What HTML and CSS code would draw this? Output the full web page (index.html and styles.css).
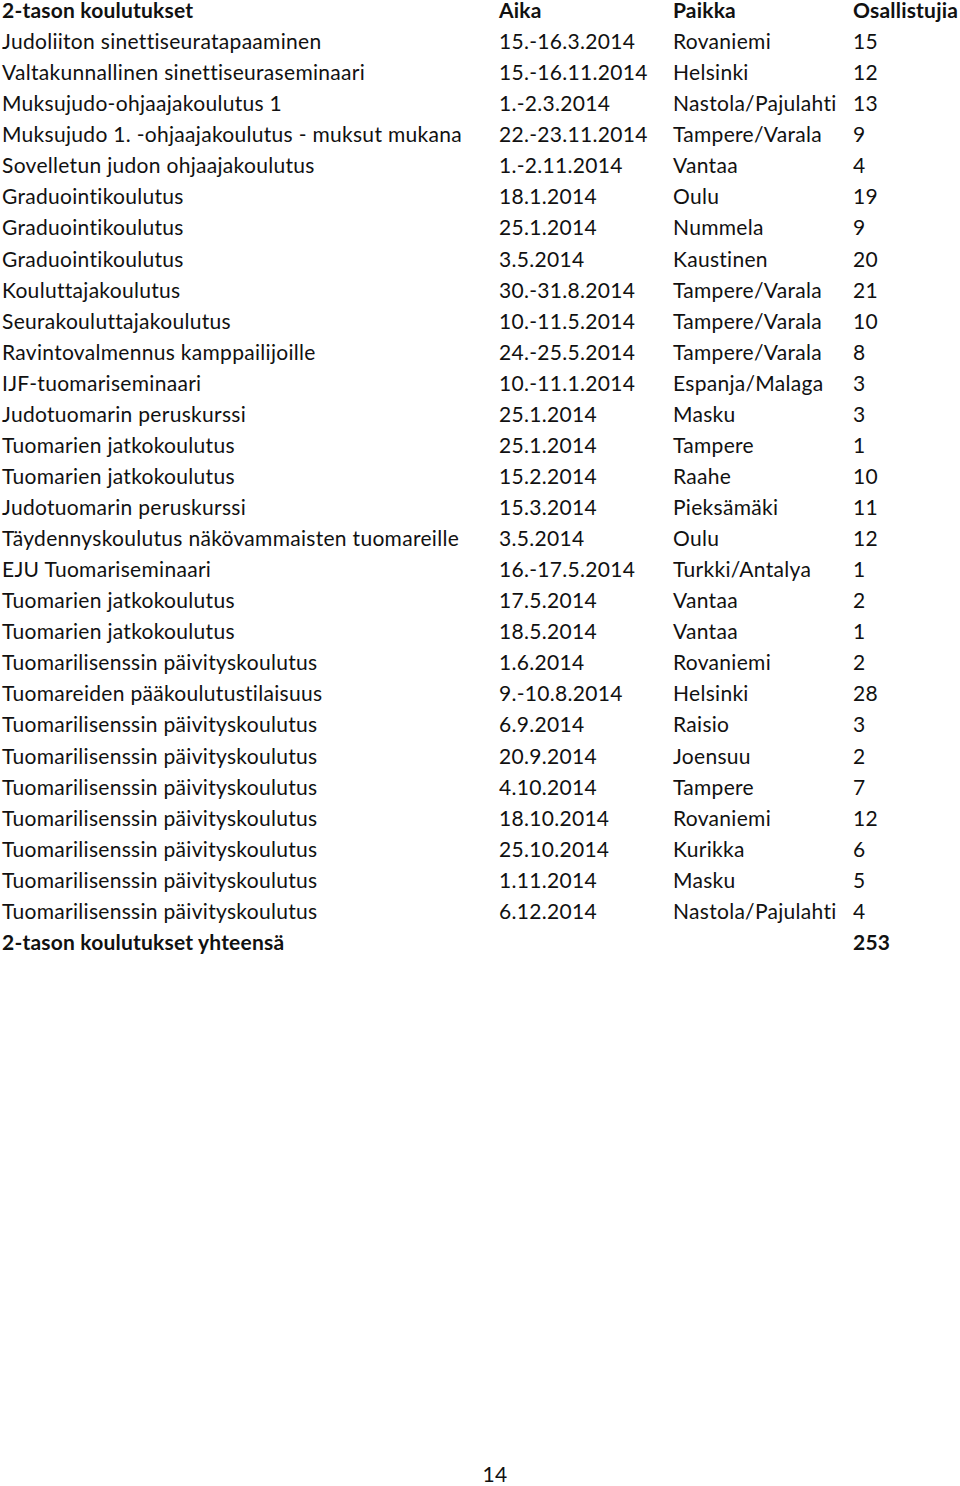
FILE: index.html
```html
<!DOCTYPE html>
<html lang="fi">
<head>
<meta charset="utf-8">
<link rel="stylesheet" href="styles.css">
</head>
<body>
<div class="page">
<div class="table">
<div class="row head"><span>2-tason koulutukset</span><span>Aika</span><span>Paikka</span><span>Osallistujia</span></div>
<div class="row"><span>Judoliiton sinettiseuratapaaminen</span><span>15.-16.3.2014</span><span>Rovaniemi</span><span>15</span></div>
<div class="row"><span>Valtakunnallinen sinettiseuraseminaari</span><span>15.-16.11.2014</span><span>Helsinki</span><span>12</span></div>
<div class="row"><span>Muksujudo-ohjaajakoulutus 1</span><span>1.-2.3.2014</span><span>Nastola/Pajulahti</span><span>13</span></div>
<div class="row"><span>Muksujudo 1. -ohjaajakoulutus - muksut mukana</span><span>22.-23.11.2014</span><span>Tampere/Varala</span><span>9</span></div>
<div class="row"><span>Sovelletun judon ohjaajakoulutus</span><span>1.-2.11.2014</span><span>Vantaa</span><span>4</span></div>
<div class="row"><span>Graduointikoulutus</span><span>18.1.2014</span><span>Oulu</span><span>19</span></div>
<div class="row"><span>Graduointikoulutus</span><span>25.1.2014</span><span>Nummela</span><span>9</span></div>
<div class="row"><span>Graduointikoulutus</span><span>3.5.2014</span><span>Kaustinen</span><span>20</span></div>
<div class="row"><span>Kouluttajakoulutus</span><span>30.-31.8.2014</span><span>Tampere/Varala</span><span>21</span></div>
<div class="row"><span>Seurakouluttajakoulutus</span><span>10.-11.5.2014</span><span>Tampere/Varala</span><span>10</span></div>
<div class="row"><span>Ravintovalmennus kamppailijoille</span><span>24.-25.5.2014</span><span>Tampere/Varala</span><span>8</span></div>
<div class="row"><span>IJF-tuomariseminaari</span><span>10.-11.1.2014</span><span>Espanja/Malaga</span><span>3</span></div>
<div class="row"><span>Judotuomarin peruskurssi</span><span>25.1.2014</span><span>Masku</span><span>3</span></div>
<div class="row"><span>Tuomarien jatkokoulutus</span><span>25.1.2014</span><span>Tampere</span><span>1</span></div>
<div class="row"><span>Tuomarien jatkokoulutus</span><span>15.2.2014</span><span>Raahe</span><span>10</span></div>
<div class="row"><span>Judotuomarin peruskurssi</span><span>15.3.2014</span><span>Pieksämäki</span><span>11</span></div>
<div class="row"><span>Täydennyskoulutus näkövammaisten tuomareille</span><span>3.5.2014</span><span>Oulu</span><span>12</span></div>
<div class="row"><span>EJU Tuomariseminaari</span><span>16.-17.5.2014</span><span>Turkki/Antalya</span><span>1</span></div>
<div class="row"><span>Tuomarien jatkokoulutus</span><span>17.5.2014</span><span>Vantaa</span><span>2</span></div>
<div class="row"><span>Tuomarien jatkokoulutus</span><span>18.5.2014</span><span>Vantaa</span><span>1</span></div>
<div class="row"><span>Tuomarilisenssin päivityskoulutus</span><span>1.6.2014</span><span>Rovaniemi</span><span>2</span></div>
<div class="row"><span>Tuomareiden pääkoulutustilaisuus</span><span>9.-10.8.2014</span><span>Helsinki</span><span>28</span></div>
<div class="row"><span>Tuomarilisenssin päivityskoulutus</span><span>6.9.2014</span><span>Raisio</span><span>3</span></div>
<div class="row"><span>Tuomarilisenssin päivityskoulutus</span><span>20.9.2014</span><span>Joensuu</span><span>2</span></div>
<div class="row"><span>Tuomarilisenssin päivityskoulutus</span><span>4.10.2014</span><span>Tampere</span><span>7</span></div>
<div class="row"><span>Tuomarilisenssin päivityskoulutus</span><span>18.10.2014</span><span>Rovaniemi</span><span>12</span></div>
<div class="row"><span>Tuomarilisenssin päivityskoulutus</span><span>25.10.2014</span><span>Kurikka</span><span>6</span></div>
<div class="row"><span>Tuomarilisenssin päivityskoulutus</span><span>1.11.2014</span><span>Masku</span><span>5</span></div>
<div class="row"><span>Tuomarilisenssin päivityskoulutus</span><span>6.12.2014</span><span>Nastola/Pajulahti</span><span>4</span></div>
<div class="row total"><span>2-tason koulutukset yhteensä</span><span></span><span></span><span>253</span></div>
</div>
<div class="pagenum">14</div>
</div>
</body>
</html>
```
FILE: styles.css
```css
html, body {
  margin: 0;
  padding: 0;
  background: #ffffff;
}
.page {
  width: 960px;
  height: 1486px;
  display: flex;
  flex-direction: column;
  font-family: Lato, "Open Sans", sans-serif;
  font-size: 21px;
  letter-spacing: 0.3px;
  font-variant-ligatures: none;
  color: #111111;
  box-sizing: border-box;
  padding: 1px 0 0 2px;
}
.table {
  display: flex;
  flex-direction: column;
}
.row {
  display: grid;
  grid-template-columns: 497px 174px 180px 1fr;
  height: 31.07px;
  line-height: 18px;
  white-space: nowrap;
}
.head, .total {
  font-weight: bold;
  letter-spacing: 0.2px;
}
.pagenum {
  margin-top: auto;
  margin-bottom: 2px;
  text-align: center;
  width: 986px;
  line-height: 20px;
  height: 20px;
}
```
